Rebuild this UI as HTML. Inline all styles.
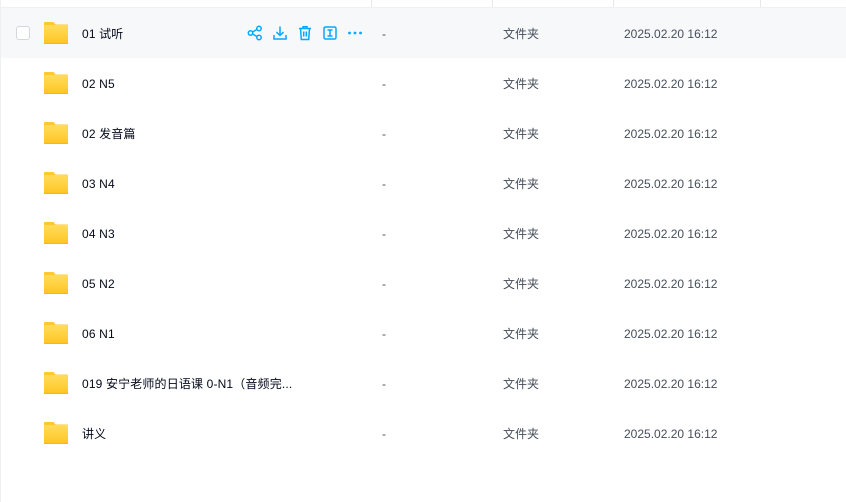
<!DOCTYPE html>
<html><head><meta charset="utf-8"><style>
*{margin:0;padding:0;box-sizing:border-box}
body{width:846px;height:502px;background:#fff;position:relative;overflow:hidden;font-family:"Liberation Sans","Noto Sans CJK SC",sans-serif;font-size:12px;color:#03081a}
.lb{position:absolute;left:0;top:0;width:1px;height:502px;background:#eef0f3}
.hd{position:absolute;left:0;top:0;width:846px;height:8px;border-bottom:1px solid #eef0f4}
.dv{position:absolute;top:0;width:1px;height:7px;background:#e6e8ec}
.row{position:absolute;left:1px;width:845px;height:50px}
.row.hl{background:#f7f8fa}
.cb{position:absolute;left:15px;top:18px;width:14px;height:14px;border:1px solid #d4d7de;border-radius:3px;background:#fff}
.fd{position:absolute;left:43px;top:14px;width:24px;height:22px}
.nm{position:absolute;left:81px;top:18px;line-height:16px;letter-spacing:0.15px}
.sz{position:absolute;left:381px;top:18px;line-height:16px;color:#454d5a}
.tp{position:absolute;left:502px;top:18px;line-height:16px;color:#454d5a}
.tm{position:absolute;left:623px;top:18px;line-height:16px;color:#454d5a}
.ic{position:absolute;top:17px}
</style></head><body>
<div class="lb"></div>
<div class="hd"></div>
<div class="dv" style="left:371px"></div><div class="dv" style="left:492px"></div><div class="dv" style="left:613px"></div><div class="dv" style="left:760px"></div>

<svg width="0" height="0" style="position:absolute"><defs>
<linearGradient id="g" x1="0" y1="0" x2="0" y2="1"><stop offset="0" stop-color="#ffdc5a"/><stop offset="1" stop-color="#ffc524"/></linearGradient>
<symbol id="f" viewBox="0 0 24 22"><path d="M1 0h8.5l2 2.5H23a1 1 0 0 1 1 1V5H0V1a1 1 0 0 1 1-1z" fill="#ffc82c"/><rect x="0" y="3" width="24" height="19" rx="1.2" fill="url(#g)"/><rect x="0" y="20.8" width="24" height="1.2" fill="#f5b81a"/></symbol>
</defs></svg>

<div class="row hl" style="top:8px">
<div class="cb"></div>
<svg class="fd"><use href="#f"/></svg>
<div class="nm">01 试听</div>
<svg class="ic" style="left:246px" width="16" height="16" viewBox="0 0 16 16" fill="none" stroke="#06a7ff" stroke-width="1.5"><circle cx="3.5" cy="8" r="2.2"/><circle cx="12" cy="3.5" r="2.2"/><circle cx="12" cy="12.5" r="2.2"/><path d="M5.5 7l4.5-2.5M5.5 9l4.5 2.5"/></svg>
<svg class="ic" style="left:271px" width="16" height="16" viewBox="0 0 16 16" fill="none" stroke="#06a7ff" stroke-width="1.5"><path d="M8 1.5v8.5M4.5 7l3.5 3.5L11.5 7M2 10v4h12v-4"/></svg>
<svg class="ic" style="left:296px" width="16" height="16" viewBox="0 0 16 16" fill="none" stroke="#06a7ff" stroke-width="1.5"><path d="M2 3.5h12M6 3.5V1.8h4v1.7M3.5 3.5l.8 11h7.4l.8-11M6.7 6.5v5M9.3 6.5v5"/></svg>
<svg class="ic" style="left:321px" width="16" height="16" viewBox="0 0 16 16" fill="none" stroke="#06a7ff" stroke-width="1.5"><rect x="2" y="2" width="12" height="12" rx="1.5"/><path d="M5.5 5h5M8 5v6M5.5 11h5"/></svg>
<svg class="ic" style="left:346px" width="16" height="16" viewBox="0 0 16 16" fill="#06a7ff"><circle cx="2.5" cy="8" r="1.4"/><circle cx="8" cy="8" r="1.4"/><circle cx="13.5" cy="8" r="1.4"/></svg>
<div class="sz">-</div><div class="tp">文件夹</div><div class="tm">2025.02.20 16:12</div>
</div>

<div class="row" style="top:58px"><svg class="fd"><use href="#f"/></svg><div class="nm">02 N5</div><div class="sz">-</div><div class="tp">文件夹</div><div class="tm">2025.02.20 16:12</div></div>
<div class="row" style="top:108px"><svg class="fd"><use href="#f"/></svg><div class="nm">02 发音篇</div><div class="sz">-</div><div class="tp">文件夹</div><div class="tm">2025.02.20 16:12</div></div>
<div class="row" style="top:158px"><svg class="fd"><use href="#f"/></svg><div class="nm">03 N4</div><div class="sz">-</div><div class="tp">文件夹</div><div class="tm">2025.02.20 16:12</div></div>
<div class="row" style="top:208px"><svg class="fd"><use href="#f"/></svg><div class="nm">04 N3</div><div class="sz">-</div><div class="tp">文件夹</div><div class="tm">2025.02.20 16:12</div></div>
<div class="row" style="top:258px"><svg class="fd"><use href="#f"/></svg><div class="nm">05 N2</div><div class="sz">-</div><div class="tp">文件夹</div><div class="tm">2025.02.20 16:12</div></div>
<div class="row" style="top:308px"><svg class="fd"><use href="#f"/></svg><div class="nm">06 N1</div><div class="sz">-</div><div class="tp">文件夹</div><div class="tm">2025.02.20 16:12</div></div>
<div class="row" style="top:358px"><svg class="fd"><use href="#f"/></svg><div class="nm">019 安宁老师的日语课 0-N1（音频完...</div><div class="sz">-</div><div class="tp">文件夹</div><div class="tm">2025.02.20 16:12</div></div>
<div class="row" style="top:408px"><svg class="fd"><use href="#f"/></svg><div class="nm">讲义</div><div class="sz">-</div><div class="tp">文件夹</div><div class="tm">2025.02.20 16:12</div></div>
</body></html>
